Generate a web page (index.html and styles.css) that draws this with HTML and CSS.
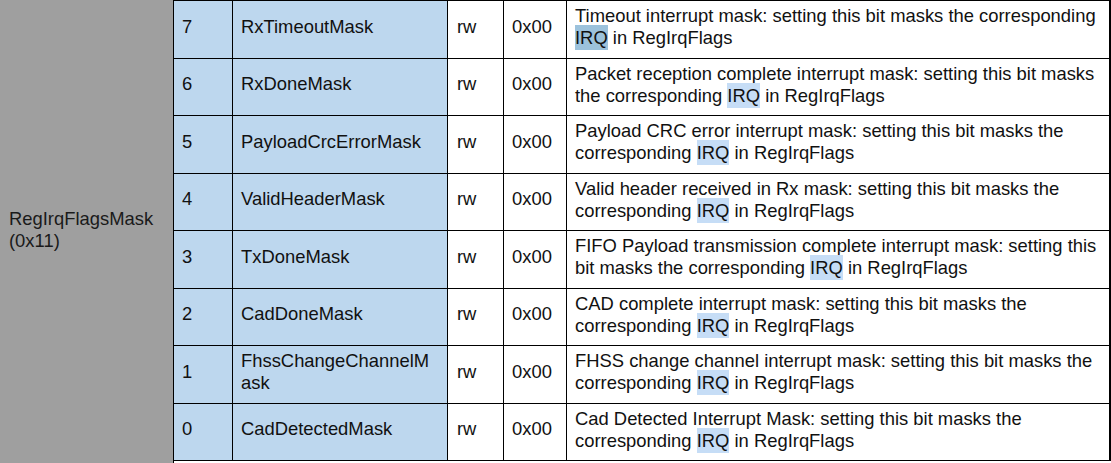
FILE: index.html
```html
<!DOCTYPE html>
<html>
<head>
<meta charset="utf-8">
<link rel="stylesheet" href="styles.css">
</head>
<body>
<div class="page">
  <div class="reg">
    <div class="reg-name">RegIrqFlagsMask<br>(0x11)</div>
  </div>
  <div class="bits">
    <div class="c bit">7</div>
    <div class="c name">RxTimeoutMask</div>
    <div class="c mode">rw</div>
    <div class="c reset">0x00</div>
    <div class="c desc">Timeout interrupt mask: setting this bit masks the corresponding<br><span class="irq sel">IRQ</span> in RegIrqFlags</div>

    <div class="c bit">6</div>
    <div class="c name">RxDoneMask</div>
    <div class="c mode">rw</div>
    <div class="c reset">0x00</div>
    <div class="c desc">Packet reception complete interrupt mask: setting this bit masks<br>the corresponding <span class="irq">IRQ</span> in RegIrqFlags</div>

    <div class="c bit">5</div>
    <div class="c name">PayloadCrcErrorMask</div>
    <div class="c mode">rw</div>
    <div class="c reset">0x00</div>
    <div class="c desc">Payload CRC error interrupt mask: setting this bit masks the<br>corresponding <span class="irq">IRQ</span> in RegIrqFlags</div>

    <div class="c bit">4</div>
    <div class="c name">ValidHeaderMask</div>
    <div class="c mode">rw</div>
    <div class="c reset">0x00</div>
    <div class="c desc">Valid header received in Rx mask: setting this bit masks the<br>corresponding <span class="irq">IRQ</span> in RegIrqFlags</div>

    <div class="c bit">3</div>
    <div class="c name">TxDoneMask</div>
    <div class="c mode">rw</div>
    <div class="c reset">0x00</div>
    <div class="c desc">FIFO Payload transmission complete interrupt mask: setting this<br>bit masks the corresponding <span class="irq">IRQ</span> in RegIrqFlags</div>

    <div class="c bit">2</div>
    <div class="c name">CadDoneMask</div>
    <div class="c mode">rw</div>
    <div class="c reset">0x00</div>
    <div class="c desc">CAD complete interrupt mask: setting this bit masks the<br>corresponding <span class="irq">IRQ</span> in RegIrqFlags</div>

    <div class="c bit">1</div>
    <div class="c name">FhssChangeChannelM<br>ask</div>
    <div class="c mode">rw</div>
    <div class="c reset">0x00</div>
    <div class="c desc">FHSS change channel interrupt mask: setting this bit masks the<br>corresponding <span class="irq">IRQ</span> in RegIrqFlags</div>

    <div class="c bit">0</div>
    <div class="c name">CadDetectedMask</div>
    <div class="c mode">rw</div>
    <div class="c reset">0x00</div>
    <div class="c desc">Cad Detected Interrupt Mask: setting this bit masks the<br>corresponding <span class="irq">IRQ</span> in RegIrqFlags</div>
  </div>
</div>
</body>
</html>
```

FILE: styles.css
```css
* { box-sizing: border-box; }
html, body { margin: 0; padding: 0; background: #fff; }
body {
  font-family: "Liberation Sans", Arial, sans-serif;
  font-size: 18.4px;
  color: #111;
}
.page {
  display: flex;
  width: 1111px;
  height: 463px;
  overflow: hidden;
}
.reg {
  width: 174px;
  height: 463px;
  background: #9f9f9f;
  border-right: 1px solid #000;
  display: flex;
  align-items: center;
  padding: 0 4px 4px 9px;
}
.reg-name {
  line-height: 22px;
  color: #1a1a1a;
}
.bits {
  display: grid;
  grid-template-columns: 59px 215px 56px 63px 544px;
  grid-auto-rows: 57.5px;
  border-top: 1px solid #000;
  height: 462px;
}
.c {
  border-right: 1px solid #000;
  border-bottom: 1px solid #000;
  display: flex;
  align-items: center;
  padding: 0 2px 5px 8px;
  line-height: 22px;
  white-space: nowrap;
}
.bit, .name { background: #bdd7ee; }
.mode { padding-left: 9px; }
.desc {
  padding-left: 8px;
  border-right: 2px solid #000;
  display: block;
  padding-top: 4px;
}
.irq {
  background: #c6ddf6;
  padding: 2px 0;
}
.irq.sel { background: #9cc2dc; }
```
